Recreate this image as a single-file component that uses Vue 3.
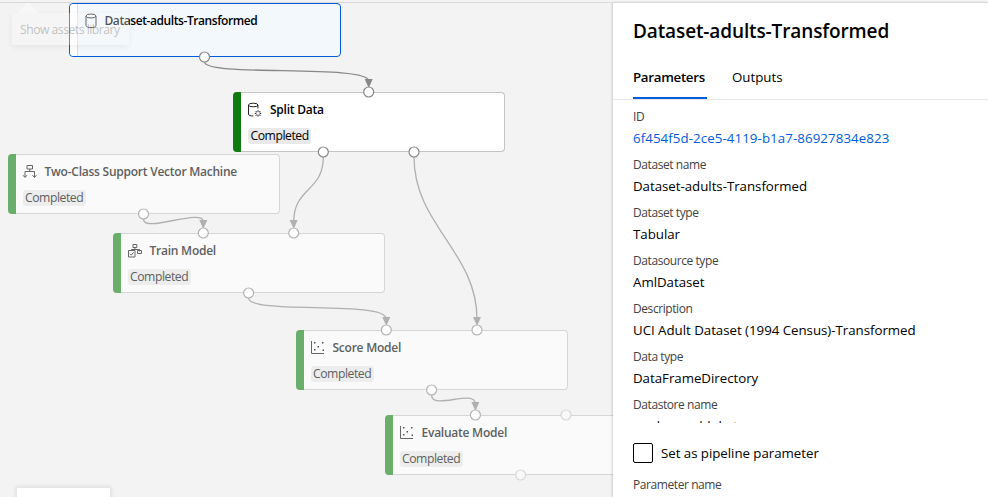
<script setup>
const nodes = [
  { id: 'dataset', x: 68.5, y: 3, title: 'Dataset-adults-Transformed', icon: 'db', selected: true },
  { id: 'split', x: 233, y: 92, title: 'Split Data', icon: 'dbgear', status: 'Completed' },
  { id: 'svm', x: 7.5, y: 154, title: 'Two-Class Support Vector Machine', icon: 'tree', status: 'Completed', dim: true },
  { id: 'train', x: 112.5, y: 233, title: 'Train Model', icon: 'train', status: 'Completed', dim: true },
  { id: 'score', x: 295.5, y: 330, title: 'Score Model', icon: 'chart', status: 'Completed', dim: true },
  { id: 'evaluate', x: 384.5, y: 415, title: 'Evaluate Model', icon: 'chart', status: 'Completed', dim: true }
]
const edges = [
  { d: 'M204.5 62C204.5 77 368.7 64 368.7 81', x: 368.7, y: 87, strong: true },
  { d: 'M323.3 157C323.3 192 293.7 187 293.7 222', x: 293.7, y: 228 },
  { d: 'M414 157C414 225 477 252 477 319', x: 477, y: 325 },
  { d: 'M143.5 219C143.5 234 203.3 207 203.3 222', x: 203.3, y: 228 },
  { d: 'M248.5 298C248.5 315 386.3 300 386.3 319', x: 386.3, y: 325 },
  { d: 'M431.6 395C431.6 411 475.4 388 475.4 404', x: 475.4, y: 410 }
]
const ports = [
  { x: 204.5, y: 57, t: 'strong' }, { x: 368.7, y: 92, t: 'strong' },
  { x: 323.3, y: 152, t: 'strong' }, { x: 414, y: 152, t: 'strong' },
  { x: 143.5, y: 214, t: 'mid' }, { x: 203.3, y: 233, t: 'mid' }, { x: 293.7, y: 233, t: 'mid' },
  { x: 248.6, y: 293, t: 'mid' }, { x: 386.3, y: 330, t: 'mid' }, { x: 477, y: 330, t: 'mid' },
  { x: 431.6, y: 390, t: 'mid' }, { x: 475.4, y: 415, t: 'mid' },
  { x: 566, y: 415, t: 'faint' }, { x: 520.6, y: 475, t: 'faint' }
]
const fields = [
  { label: 'ID', value: '6f454f5d-2ce5-4119-b1a7-86927834e823', link: true },
  { label: 'Dataset name', value: 'Dataset-adults-Transformed' },
  { label: 'Dataset type', value: 'Tabular' },
  { label: 'Datasource type', value: 'AmlDataset' },
  { label: 'Description', value: 'UCI Adult Dataset (1994 Census)-Transformed' },
  { label: 'Data type', value: 'DataFrameDirectory' },
  { label: 'Datastore name', value: 'workspaceblobstore' }
]
</script>

<template>
  <div class="page">
    <main class="canvas">
      <div
        v-for="n in nodes"
        :key="n.id"
        class="node"
        :class="{ selected: n.selected, dim: n.dim }"
        :style="{ left: n.x + 'px', top: n.y + 'px' }"
      >
        <div class="stripe"></div>
        <div class="body">
          <div class="heading">
            <svg class="icon" viewBox="0 0 14 14" width="14" height="14">
              <g v-if="n.icon === 'db'">
                <ellipse cx="7" cy="2" rx="5" ry="2" />
                <path d="M2 2V11.5C2 14.3 12 14.3 12 11.5V2" />
              </g>
              <g v-else-if="n.icon === 'dbgear'">
                <ellipse cx="5.2" cy="2" rx="4.7" ry="1.8" />
                <path d="M.5 2V11C.5 12.600 2.500 13 5.500 13M9.900 2V5.500" />
                <circle cx="10" cy="10.400" r="1.900" />
                <path d="M10 7.200v1.300M10 12.300v1.300M6.800 10.400h1.300M11.900 10.400h1.300M7.700 8.100l1 1M11.300 11.700l1 1M12.300 8.100l-1 1M8.700 11.700l-1 1" />
              </g>
              <g v-else-if="n.icon === 'tree'">
                <path d="M4 .5h5.500v3.500H4zM6.750 4v3M2 12V6.500h9.500v5.500M0 10.200l2 2.300 2-2.300M9.500 10.200l2 2.300 2-2.300" />
              </g>
              <g v-else-if="n.icon === 'train'">
                <path d="M5 .5h3.800v3H5zM6.900 3.500v2M3.500 6.500v-1h8v2M.5 6.500h6.500v6.500H.500zM9.500 6.500h4v3h-4zM2 9.800l1.300 1.300 2.300-2.700" />
              </g>
              <g v-else>
                <path d="M.5 0V12.500H13" />
                <path class="dots" d="M3 1h1.500v1.500H3zM3 8h1.500v1.500H3zM6.500 5h1.500v1.500H6.500zM11 1h1.500v1.500H11zM11.500 8.500h1.500v1.500H11.500z" />
              </g>
            </svg>
            <span class="title">{{ n.title }}</span>
          </div>
          <span v-if="n.status" class="status">{{ n.status }}</span>
        </div>
      </div>
      <svg class="wires" width="613" height="497" viewBox="0 0 613 497">
        <g v-for="(e, i) in edges" :key="i" :class="{ strong: e.strong }">
          <path class="wire" :d="e.d" />
          <path class="arrow" :d="`M${e.x - 4} ${e.y - 8}H${e.x + 4}L${e.x} ${e.y + 1}Z`" />
        </g>
        <circle v-for="(p, i) in ports" :key="'p' + i" :class="p.t" :cx="p.x" :cy="p.y" r="5" />
      </svg>
      <div class="tooltip">Show assets library</div>
      <div class="minimap"></div>
    </main>
    <aside class="panel">
      <h1>Dataset-adults-Transformed</h1>
      <nav class="tabs">
        <span class="tab active">Parameters</span>
        <span class="tab">Outputs</span>
      </nav>
      <dl class="fields">
        <template v-for="f in fields" :key="f.label">
          <dt>{{ f.label }}</dt>
          <dd :class="{ link: f.link }">{{ f.value }}</dd>
        </template>
      </dl>
      <label class="check"><span class="box"></span><span>Set as pipeline parameter</span></label>
      <div class="param">Parameter name</div>
    </aside>
  </div>
</template>

<style>
body { overflow: hidden; }
</style>
<style scoped>
* { box-sizing: border-box; }
.page { display: flex; width: 988px; height: 497px; font-family: "Open Sans", "Noto Sans", sans-serif; font-size: 13.3px; color: #000; background: #fff; border-top: 2px solid #f8f8f8; position: relative; }
.page::before { content: ""; position: absolute; z-index: 5; left: 0; right: 0; top: 0; height: 1px; background: #d9d9d9; }
.canvas { position: relative; width: 613px; height: 497px; margin-top: -2px; flex: none; overflow: hidden; background: #f3f3f3; }
.node { position: absolute; display: flex; width: 272px; height: 60px; background: #fff; border: 1px solid #c4c4c4; border-left: 0; border-radius: 4px; }
.stripe { width: 8px; margin: -1px 0; background: #107c10; border-radius: 4px 0 0 4px; flex: none; }
.body { padding: 7px 0 0 7px; }
.heading { display: flex; align-items: center; height: 20px; gap: 8px; white-space: nowrap; }
.icon { flex: none; fill: none; stroke: #222; stroke-width: 1; overflow: visible; }
.dots { fill: #333; stroke: none; }
.title { font-size: 12px; font-weight: 600; line-height: 20px; letter-spacing: -.24px; }
.status { display: inline-block; height: 16px; margin-top: 8px; padding: 0 2.5px; border-radius: 3px; background: #e9e9e9; font-size: 12.2px; line-height: 16px; letter-spacing: -.45px; }
.dim { background: #fafafa; border-color: #d6d6d6; }
.dim .stripe { background: #6bae6b; }
.dim .title, .dim .status { color: #606060; }
.dim .status { background: #ededed; }
.dim .icon { stroke: #666; }
.dim .dots { fill: #555; }
.selected { height: 54px; border: 1px solid #015cda; background: #f3f8fd; }
.selected .stripe { width: 8px; margin: 0; background: #fff; border-right: 1px solid #ddd; }
.selected .body { padding-left: 6px; }
.selected .heading { gap: 7px; }
.selected .title { letter-spacing: -.42px; }
.wires { position: absolute; left: 0; top: 0; }
.wire { fill: none; stroke: #b1b0ae; stroke-width: 1.3; }
.arrow { fill: #b1b0ae; }
.strong .wire { stroke: #8a8886; }
.strong .arrow { fill: #8a8886; }
circle { fill: #fff; stroke: #b5b4b2; stroke-width: 1.2; }
circle.strong { stroke: #8a8886; }
circle.faint { fill: #f8f8f8; stroke: #d8d8d8; }
.tooltip { position: absolute; left: 12px; top: 13px; width: 117px; height: 32px; padding-left: 8px; line-height: 34px; font-size: 12.2px; letter-spacing: -.5px; white-space: nowrap; color: rgba(90, 90, 90, .36); background: rgba(250, 250, 250, .32); border-radius: 2px; box-shadow: 0 2px 6px rgba(0, 0, 0, .06); }
.tooltip::before { content: ""; position: absolute; left: 5px; top: -11px; border: 11px solid transparent; border-top: 0; border-bottom-color: rgba(250, 250, 250, .7); }
.minimap { position: absolute; left: 16px; top: 487px; width: 95px; height: 20px; background: #fff; border: 1px solid #e6e6e6; box-shadow: 0 0 4px rgba(0, 0, 0, .12); }
.panel { position: relative; flex: 1; min-width: 0; height: 495px; background: #fff; box-shadow: -1px 0 2px rgba(0, 0, 0, .16); overflow: hidden; white-space: nowrap; }
h1 { margin: 0; padding: 14px 20px 0; height: 56px; font-size: 19px; line-height: 30px; font-weight: 600; letter-spacing: -.12px; }
.tabs { display: flex; gap: 25px; height: 42px; padding: 0 20px; border-bottom: 1px solid #e6e6e6; }
.tab { height: 41px; line-height: 38px; }
.active { width: 74px; font-weight: 600; letter-spacing: -.3px; border-bottom: 2px solid #015cda; }
.fields { margin: 0; padding: 6px 20px 0; height: 323px; overflow: hidden; }
dt, .param { height: 21px; line-height: 21px; font-size: 12px; letter-spacing: -.42px; color: #424242; }
dd { margin: 0; height: 27px; line-height: 23px; letter-spacing: -.03px; }
.link { color: #015cda; letter-spacing: .08px; }
.check { display: flex; align-items: center; gap: 8px; height: 20px; margin: 20px 0 0 20px; letter-spacing: -.04px; }
.box { width: 20px; height: 20px; border: 1px solid #000; border-radius: 2px; }
.param { margin: 11px 20px 0; }
</style>
